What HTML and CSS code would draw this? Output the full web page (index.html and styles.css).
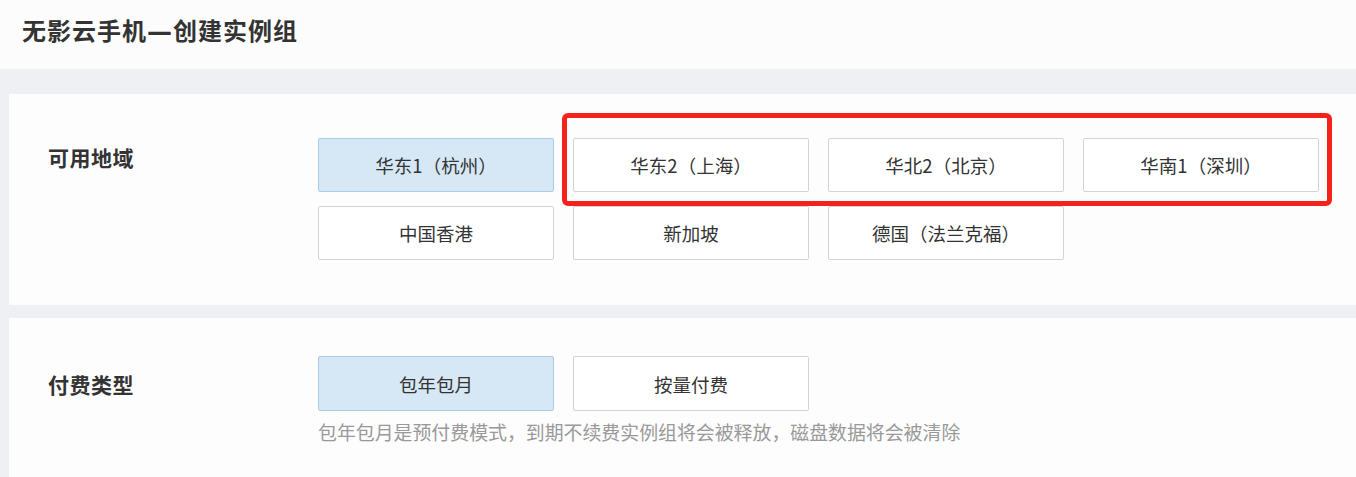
FILE: index.html
```html
<!DOCTYPE html>
<html lang="zh-CN">
<head>
<meta charset="utf-8">
<title>无影云手机—创建实例组</title>
<link rel="stylesheet" href="styles.css">
</head>
<body>
<header class="page-header">
  <h1 class="page-title">无影云手机<span class="dash">—</span>创建实例组</h1>
</header>
<main class="page-body">
  <section class="panel panel-region">
    <div class="field field-top">
      <div class="field-label label-region">可用地域</div>
      <div class="options">
        <button class="option selected">华东1（杭州）</button>
        <button class="option">华东2（上海）</button>
        <button class="option">华北2（北京）</button>
        <button class="option">华南1（深圳）</button>
        <button class="option">中国香港</button>
        <button class="option">新加坡</button>
        <button class="option">德国（法兰克福）</button>
      </div>
    </div>
  </section>
  <section class="panel panel-pay">
    <div class="field field-center">
      <div class="field-label">付费类型</div>
      <div class="options">
        <button class="option selected">包年包月</button>
        <button class="option">按量付费</button>
      </div>
    </div>
    <p class="hint">包年包月是预付费模式，到期不续费实例组将会被释放，磁盘数据将会被清除</p>
  </section>
  <div class="highlight-box"></div>
</main>
</body>
</html>
```

FILE: styles.css
```css
* {
  box-sizing: border-box;
}

html, body {
  margin: 0;
  padding: 0;
}

body {
  font-family: "Noto Sans CJK SC", "Noto Sans", "Liberation Sans", sans-serif;
  color: #333;
  background: #eef0f4;
  width: 1356px;
  height: 477px;
  overflow: hidden;
  position: relative;
}

.page-header {
  height: 69px;
  background: #fcfcfc;
  display: flex;
  align-items: center;
  padding-left: 22px;
}

.page-title {
  margin: 0 0 7px 0;
  font-size: 24px;
  font-weight: 700;
  letter-spacing: 1px;
  color: #333;
  line-height: 32px;
}

.dash {
  font-family: "DejaVu Sans", "Liberation Sans", sans-serif;
  font-weight: 700;
  font-size: 25px;
  letter-spacing: 0;
  margin-right: 1px;
}

.page-body {
  padding: 25px 0 0 9px;
}

.panel {
  background: #fdfdfd;
}

.panel-region {
  height: 211px;
  padding: 44px 0 0 39px;
  margin-bottom: 13px;
}

.panel-pay {
  height: 170px;
  padding: 38px 0 0 39px;
}

.field {
  display: flex;
}

.field-top {
  align-items: flex-start;
}

.field-center {
  align-items: center;
}

.field-label {
  width: 270px;
  flex: none;
  font-size: 21px;
  font-weight: 700;
  line-height: 30px;
  letter-spacing: 0.5px;
  color: #333;
}

.label-region {
  margin-top: 4px;
}

.options {
  display: grid;
  grid-template-columns: repeat(4, 236px);
  column-gap: 19px;
  row-gap: 14px;
}

.option {
  height: 54px;
  border: 1px solid #d3d3d3;
  border-radius: 2px;
  background: #fff;
  font-family: inherit;
  font-size: 18.5px;
  color: #333;
  padding: 0;
  margin: 0;
}

.option.selected {
  background: #d6e8f5;
  border-color: #a9cde8;
}

.panel-pay .option {
  height: 55px;
}

.hint {
  margin: 8px 0 0 270px;
  font-size: 18.9px;
  line-height: 26px;
  color: #999;
}

.highlight-box {
  position: absolute;
  left: 562px;
  top: 113px;
  width: 770px;
  height: 93px;
  border: 5px solid #f5221b;
  border-radius: 6px;
  pointer-events: none;
}
```
